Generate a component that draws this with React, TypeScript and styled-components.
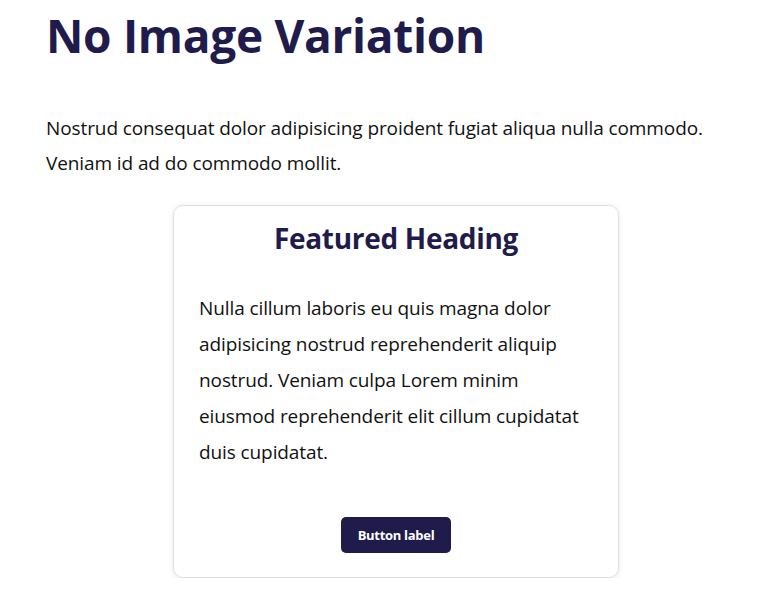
import React from "react";
import styled, { createGlobalStyle } from "styled-components";

const Global = createGlobalStyle`
  html, body { margin: 0; padding: 0; background: #ffffff; }
  body { font-family: "Open Sans", "Noto Sans", sans-serif; color: #111111; }
`;

const Page = styled.main`
  padding: 0 20px 0 46px;
  display: flex;
  flex-direction: column;
`;

const Title = styled.h1`
  margin: 5px 0 0;
  font-size: 46px;
  line-height: 60px;
  font-weight: 700;
  color: #1f1b4b;
  letter-spacing: -0.3px;
`;

const Intro = styled.p`
  margin: 46px 0 0;
  font-size: 19px;
  line-height: 35px;
  letter-spacing: -0.1px;
`;

const Card = styled.section`
  align-self: center;
  margin: 24px 0 0;
  width: 446px;
  box-sizing: border-box;
  padding: 14px 25px 24px;
  border: 1px solid #e0e0e0;
  border-radius: 10px;
  box-shadow: 0 1px 5px rgba(0, 0, 0, 0.1);
  display: flex;
  flex-direction: column;
  align-items: center;
`;

const CardTitle = styled.h2`
  margin: 0;
  font-size: 28px;
  line-height: 36px;
  font-weight: 700;
  color: #1f1b4b;
  text-align: center;
  letter-spacing: -0.3px;
`;

const CardText = styled.p`
  align-self: stretch;
  margin: 34px 0 0;
  font-size: 19px;
  line-height: 36px;
  letter-spacing: -0.1px;
`;

const Button = styled.button`
  margin-top: 47px;
  width: 110px;
  height: 36px;
  border: none;
  border-radius: 5px;
  background: #1f1b4b;
  color: #ffffff;
  font-family: "Open Sans", "Noto Sans", sans-serif;
  font-size: 13px;
  font-weight: 700;
  letter-spacing: -0.3px;
  cursor: pointer;
`;

export default function App() {
  return (
    <>
      <Global />
      <Page>
        <Title>No Image Variation</Title>
        <Intro>
          Nostrud consequat dolor adipisicing proident fugiat aliqua nulla commodo.
          Veniam id ad do commodo mollit.
        </Intro>
        <Card>
          <CardTitle>Featured Heading</CardTitle>
          <CardText>
            Nulla cillum laboris eu quis magna dolor adipisicing nostrud reprehenderit
            aliquip nostrud. Veniam culpa Lorem minim eiusmod reprehenderit elit cillum
            cupidatat duis cupidatat.
          </CardText>
          <Button>Button label</Button>
        </Card>
      </Page>
    </>
  );
}
